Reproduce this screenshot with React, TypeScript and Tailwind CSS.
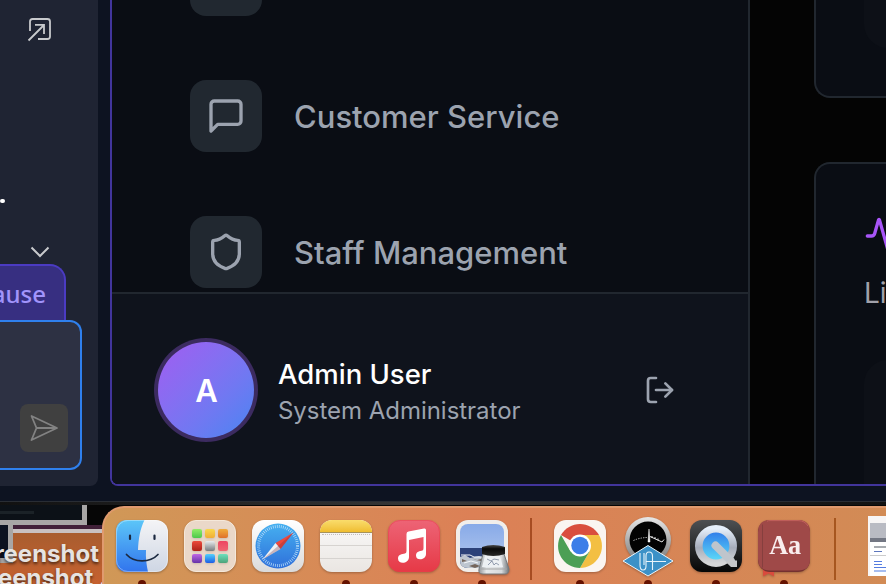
import type { ReactNode } from "react";
import { Activity, LogOut, Shield } from "lucide-react";

const sans = "font-['Inter','Liberation_Sans',sans-serif]";

function ChatPanel() {
  return (
    <aside className="flex h-[486px] w-[98px] shrink-0 flex-col overflow-hidden rounded-br-lg bg-[#1f2433]">
      <svg className="mt-[17px] ml-[27px] h-[25px] w-[25px] shrink-0" viewBox="0 0 25 25" fill="none" stroke="#c8cacd" strokeWidth="1.8">
        <path d="M3 14V4.500Q3 2 5.500 2H20.500Q23 2 23 4.500V19.500Q23 22 20.500 22H11M1.500 23.500 17 8M8 7.800H17V17" />
      </svg>
      <span className="mt-[157px] h-[4px] w-[4.500px] shrink-0 rounded-full bg-white" />
      <svg className="mt-[43px] ml-[30px] h-[12px] w-[20px] shrink-0" viewBox="0 0 20 12" fill="none" stroke="#c8cacd" strokeWidth="2">
        <path d="m1.500 1.500 8.500 8.500 8.500-8.500" />
      </svg>
      <div className="mt-[6px] flex h-[56px] w-[66px] shrink-0 items-center justify-end rounded-tr-[16px] border-t-2 border-r-2 border-[#4b3bc2] bg-[#372f81] pr-[18px] text-[#a194fb]">
        <span className="pt-px font-['Noto_Sans',sans-serif] text-[24px] leading-none font-medium">ause</span>
      </div>
      <div className="flex h-[150px] w-[82px] shrink-0 items-end justify-end rounded-r-xl border-y-2 border-r-2 border-[#2f80ed] bg-[#2d3143] pr-[12px] pb-[16px]">
        <button className="flex h-12 w-12 items-center justify-center rounded-lg bg-[#404040]">
          <svg className="h-[30px] w-[30px]" viewBox="0 0 30 30" fill="none" stroke="#828282" strokeWidth="1.8" strokeLinejoin="round">
            <path d="M2.500 3 28 15 2.500 27 7.500 15ZM7.500 15H28" />
          </svg>
        </button>
      </div>
    </aside>
  );
}

function MessageIcon() {
  return (
    <svg className="h-10 w-10" viewBox="0 0 24 24" fill="none" stroke="currentColor" strokeWidth="2" strokeLinecap="round" strokeLinejoin="round">
      <path d="M21 15a2 2 0 0 1-2 2H7l-4 4V5a2 2 0 0 1 2-2h14a2 2 0 0 1 2 2z" />
    </svg>
  );
}

function NavItem({ icon, label }: { icon: ReactNode; label: string }) {
  return (
    <a className="flex h-[72px] shrink-0 items-center gap-8 pl-[78px] text-[#9ca3af]">
      <span className="flex h-[72px] w-[72px] items-center justify-center rounded-[16px] bg-[#212830]">{icon}</span>
      <span className="pt-[3px] text-[31px] font-medium whitespace-nowrap">{label}</span>
    </a>
  );
}

function Sidebar() {
  return (
    <nav className="flex h-full w-[638px] shrink-0 flex-col border-r-2 border-[#21272f] bg-[#0a0d14]">
      <div className="flex h-[292px] shrink-0 flex-col overflow-hidden">
        <span className="ml-[78px] h-[16px] w-[72px] shrink-0 rounded-b-[16px] bg-[#212830]" />
        <div className="mt-16 flex flex-col gap-16">
          <NavItem label="Customer Service" icon={<MessageIcon />} />
          <NavItem label="Staff Management" icon={<Shield size={40} strokeWidth={2} />} />
        </div>
      </div>
      <div className="flex flex-1 items-center border-t-2 border-[#21272f] bg-[#0f131c] pt-[2px] pl-[42px]">
        <span className="flex h-[104px] w-[104px] items-center justify-center rounded-full bg-[#3c2b60] p-1">
          <span className="flex h-full w-full items-center justify-center rounded-full bg-linear-to-br from-[#a05cf1] to-[#4385f2] pt-[2px] pl-px text-[31px] font-semibold text-white">A</span>
        </span>
        <span className="mt-[4px] ml-[20px] flex flex-col whitespace-nowrap">
          <span className="text-[27.500px] leading-[36px] font-medium text-white">Admin User</span>
          <span className="text-[24px] leading-[37px] tracking-[-0.03px] text-[#9ca3af]">System Administrator</span>
        </span>
        <LogOut className="mr-[72px] ml-auto text-[#9ca3af]" size={32} strokeWidth={2} />
      </div>
    </nav>
  );
}

function Dashboard() {
  return (
    <main className="flex h-full w-[136px] flex-col overflow-hidden bg-[#040404] pl-16">
      <section className="flex h-[98px] w-[90px] shrink-0 justify-end rounded-bl-[16px] border-b-2 border-l-2 border-[#21272f] bg-[#0a0d14]">
        <span className="mr-[-6px] h-[48px] w-[46px] rounded-bl-[24px] bg-[#0d1017]" />
      </section>
      <section className="mt-16 flex w-[90px] flex-1 shrink-0 flex-col rounded-tl-[16px] border-t-2 border-l-2 border-[#21272f] bg-[#0a0d14] pl-12">
        <Activity className="mt-[52px] h-10 w-10 shrink-0 text-[#a855f7]" strokeWidth={2} />
        <span className="mt-[17px] text-[28px] leading-[40px] whitespace-nowrap text-[#a1a1aa]">Live</span>
        <span className="mt-[47px] w-[46px] flex-1 rounded-tl-[24px] bg-[#0d1017]" />
      </section>
    </main>
  );
}

function Desktop() {
  return (
    <div className="h-[82px] w-full overflow-hidden bg-[#060606]">
      <div className="h-[3px] bg-linear-to-r from-[#111] via-[#3a3a3a] to-[#111]" />
      <div className="flex h-[20px]">
        <div className="w-[87px] border-r-[5px] border-b-[5px] border-[#a8a6a5] bg-[#0c1117] pt-[6px]">
          <div className="h-[3px] w-[34px] bg-[#1b2227]" />
        </div>
      </div>
      <div className="flex h-[59px] bg-linear-to-b from-[#a45c2f] to-[#c6612f]">
        <div className="h-[38px] w-[13px] shrink-0 border-r-[5px] border-b-[5px] border-[#a8a6a5] bg-[#0c1220]" />
        <div className="h-[8px] w-[100px] border-b-4 border-[#c9c1c1] bg-[#412038]" />
      </div>
    </div>
  );
}

function FileLabels() {
  return (
    <div className="absolute top-[542px] left-[-20px] flex w-[130px] flex-col font-bold whitespace-nowrap text-[#e6e3e1] [text-shadow:0_2px_3px_#0009]">
      <span className="w-[119px] text-right text-[24px] leading-[24px]">reenshot</span>
      <span className="w-[127px] text-right text-[24px] leading-[24px]">reenshot .</span>
    </div>
  );
}

function Finder() {
  return (
    <svg viewBox="0 0 52 52" className="h-full w-full">
      <defs>
        <linearGradient id="fBlue" x2="0" y2="1"><stop stopColor="#5cc6f8" /><stop offset="1" stopColor="#3174ed" /></linearGradient>
        <linearGradient id="fWhite" x2="0" y2="1"><stop stopColor="#f4f4f6" /><stop offset="1" stopColor="#ced6e4" /></linearGradient>
      </defs>
      <rect width="52" height="52" rx="12" fill="url(#fWhite)" />
      <path d="M12 0H28.500C24 9 22.500 19 22 30H30C29.500 38 30.500 45 32 52H12Q0 52 0 40V12Q0 0 12 0Z" fill="url(#fBlue)" />
      <path d="M10.500 34.500C18 43 34 43 42 34.500" fill="none" stroke="#1b2940" strokeWidth="1.700" strokeLinecap="round" />
      <path d="M14 15.500v3.500M38.500 15.500v3.500" fill="none" stroke="#1b2940" strokeWidth="2.200" strokeLinecap="round" />
      <rect x=".5" y=".5" width="51" height="51" rx="11.500" fill="none" stroke="#fff" strokeOpacity=".35" />
    </svg>
  );
}

const tiles = [
  "from-[#90ed67] to-[#4bc84b]", "from-[#f9d84c] to-[#f0ad35]", "from-[#f0ad3c] to-[#df702b]",
  "from-[#ec493b] to-[#ad2118]", "from-[#e9edee] to-[#777c7e]", "from-[#ee4561] to-[#ef6571]",
  "from-[#c066e5] to-[#6633a8]", "from-[#57d0fa] to-[#235be4]", "from-[#6ce0bd] to-[#4ca37a]",
];

function Launchpad() {
  return (
    <div className="grid h-full w-full grid-cols-3 content-center justify-center gap-[3px] rounded-xl border border-[#f5e8da] bg-[#ead8c9] p-[7px]">
      {tiles.map((t) => <span key={t} className={"h-[9.500px] rounded-[2px] bg-linear-to-b shadow-sm " + t} />)}
    </div>
  );
}

function Safari() {
  return (
    <svg viewBox="0 0 52 52" className="h-full w-full">
      <defs>
        <linearGradient id="sBlue" x2="0" y2="1"><stop stopColor="#46b0f0" /><stop offset="1" stopColor="#2f70da" /></linearGradient>
        <linearGradient id="sBg" x2="0" y2="1"><stop stopColor="#fff" /><stop offset="1" stopColor="#dadada" /></linearGradient>
      </defs>
      <rect width="52" height="52" rx="12" fill="url(#sBg)" />
      <circle cx="26" cy="26" r="22.500" fill="url(#sBlue)" />
      <circle cx="26" cy="26" r="19.500" fill="none" stroke="#bde1fa" strokeWidth="3" strokeDasharray=".7 1.350" />
      <path d="m41.500 12.500-18 10.500 5 6Z" fill="#ef493d" />
      <path d="m10.500 39.500 13-16.500 5 6Z" fill="#f0f1f3" />
      <path d="m10.500 39.500 31-27-13 16.500Z" fill="#712c3e" opacity=".3" />
    </svg>
  );
}

function Notes() {
  return (
    <div className="flex h-full w-full flex-col overflow-hidden rounded-xl bg-linear-to-b from-[#fafafa] to-[#eae6e2]">
      <span className="h-[13px] shrink-0 border-b border-[#a6935b] bg-linear-to-b from-[#fadd6b] to-[#efbd2e]" />
      <span className="mx-[2px] border-b border-dotted border-[#c3bebb] pt-px" />
      <span className="h-[11px] border-b border-[#d6d3d0]" />
      <span className="h-[13px] border-b border-[#d6d3d0]" />
    </div>
  );
}

function Music() {
  return (
    <svg viewBox="0 0 52 52" className="h-full w-full">
      <defs><linearGradient id="mRed" x2="0" y2="1"><stop stopColor="#ed6476" /><stop offset="1" stopColor="#e63946" /></linearGradient></defs>
      <rect width="52" height="52" rx="12" fill="url(#mRed)" />
      <rect x=".5" y=".5" width="51" height="51" rx="11.500" fill="none" stroke="#e83e4a" strokeOpacity=".5" />
      <path d="M18.500 14Q18.500 12 20.500 11.600L36 8.500Q38 8.100 38 10V34C38 40 28 41.500 28 35.500C28 31.500 32 31 34.500 30.500Q35.500 30.200 35.500 28V17L21 20V37C21 44 10 45 10 38.500C10 34.500 14 34 17 33.500Q18.500 33.200 18.500 31Z" fill="#fff" />
    </svg>
  );
}

function Preview() {
  return (
    <svg viewBox="0 0 52 52" className="h-full w-full overflow-visible">
      <defs>
        <linearGradient id="pSky" x2="0" y2="1"><stop stopColor="#88aae8" /><stop offset="1" stopColor="#b5caee" /></linearGradient>
        <linearGradient id="pGlass"><stop stopColor="#929599" /><stop offset=".25" stopColor="#e6e9eb" /><stop offset=".75" stopColor="#d7dadc" /><stop offset="1" stopColor="#6e7377" /></linearGradient>
        <linearGradient id="pCap" x2="0" y2="1"><stop stopColor="#4b4b4b" /><stop offset=".35" stopColor="#090909" /><stop offset="1" stopColor="#292929" /></linearGradient>
      </defs>
      <rect width="52" height="52" rx="12" fill="#f1eeeb" />
      <rect x="4" y="4" width="44" height="44" rx="8" fill="url(#pSky)" />
      <path d="M4 28H48V40Q48 48 40 48H12Q4 48 4 40Z" fill="#2c4178" />
      <path d="M4 37 9 35 14 38 23 36 31 39V48H12Q4 48 4 40Z" fill="#bdc5cf" />
      <path d="m6 39 5 2-5 1Zm9-1 6 2 4-1v2l-5-1Zm-2 8 6-2 5 2-5 2Z" fill="#75655b" />
      <path d="M5 35h9l4 2h8M8 43l7-2 7 2" stroke="#f5f7fa" fill="none" />
      <path d="M27 34H48L53 49Q53 54 49 54H27Q22 54 23 49Z" fill="url(#pGlass)" stroke="#74797d" />
      <path d="M29 36H44L47 47H26Z" fill="#edf0f3" />
      <path d="m31 39 4 2 3-2 5 1M32 45l4-4 2 4 2-2 3 2" stroke="#7b879c" strokeWidth=".8" fill="none" />
      <path d="M25 49H51" stroke="#a5a5a5" />
      <path d="M26 27Q37 23 49 27V34Q37 38 26 34Z" fill="url(#pCap)" />
    </svg>
  );
}

function Chrome() {
  return (
    <svg viewBox="0 0 52 52" className="h-full w-full">
      <rect width="52" height="52" rx="12" fill="#faf5f1" />
      <path d="M26 26 7 15A22 22 0 0 1 45 15Z" fill="#d94e3e" />
      <path d="M26 15H45A22 22 0 0 1 26 48L35.500 31.500Z" fill="#f3bf42" />
      <path d="M7 15A22 22 0 0 0 26 48L35.500 31.500 26 26 16.500 31.500Z" fill="#4c9f55" />
      <circle cx="26" cy="25.500" r="11" fill="#fff" />
      <circle cx="26" cy="25.500" r="8.700" fill="#3d7ee8" />
    </svg>
  );
}

function UniversalAudio() {
  return (
    <svg viewBox="0 0 52 52" className="h-full w-full overflow-visible">
      <defs><linearGradient id="uRing" x2="0" y2="1"><stop stopColor="#e7e7e7" /><stop offset="1" stopColor="#777" /></linearGradient></defs>
      <circle cx="26" cy="20" r="23" fill="url(#uRing)" />
      <circle cx="26" cy="20" r="18.500" fill="#030303" />
      <path d="M11.500 20.500Q18 17.500 26 17.500" fill="none" stroke="#c4c4c4" strokeDasharray="1.300 1.200" />
      <path d="M26 22 27 9 28 22Z" fill="#fff" stroke="#fff" strokeWidth=".5" />
      <path d="M28 16.500 40 22 42 19.500M30 16v2m3-1v2m3-.500v2" fill="none" stroke="#e4e4e4" strokeWidth="1" />
      <path d="M26 25.500 51 41 26 56 1 41Z" fill="#3c91c7" stroke="#eaf5fb" strokeWidth="1" />
      <path d="M18 33V45Q18 50 21 50Q24 50 24 46V36Q24 32 27 32Q30.500 32 30.500 36V50M22 33V45M24 41.500H44" fill="none" stroke="#e7f4fb" strokeWidth="1.100" />
    </svg>
  );
}

function QuickTime() {
  return (
    <svg viewBox="0 0 52 52" className="h-full w-full">
      <defs>
        <linearGradient id="qBg" x2="0" y2="1"><stop stopColor="#4d5053" /><stop offset="1" stopColor="#050606" /></linearGradient>
        <linearGradient id="qRing" x2="0" y2="1"><stop stopColor="#e5effb" /><stop offset=".55" stopColor="#a6adbb" /><stop offset="1" stopColor="#d5d6d7" /></linearGradient>
        <linearGradient id="qBlue" x2="0" y2="1"><stop stopColor="#2c74e8" /><stop offset="1" stopColor="#60e2fa" /></linearGradient>
      </defs>
      <rect width="52" height="52" rx="12" fill="url(#qBg)" />
      <circle cx="26" cy="26" r="17.200" fill="url(#qBlue)" stroke="url(#qRing)" strokeWidth="7.600" />
      <path d="M25.500 25.500 41 41" stroke="#bfc5cc" strokeWidth="8" strokeLinecap="round" />
      <path d="M36 42 43 37.500 44 40.500H47V47H41Z" fill="#c5c7c9" />
    </svg>
  );
}

function Dictionary() {
  return (
    <svg viewBox="0 0 52 52" className="h-full w-full overflow-visible">
      <path d="M5 48H16V56.500L10.500 53.500 5 56.500Z" fill="#d94b3d" />
      <rect width="52" height="52" rx="12" fill="#74302f" />
      <path d="M12 0H40Q52 0 52 12V39Q52 50.500 40 50.500H12Q0 50.500 0 39V12Q0 0 12 0Z" fill="#9f4948" />
      <path d="M9 1.200Q10 .600 12 .600H40Q47 .600 50 6" fill="none" stroke="#c2605c" />
      <path d="M4.500 4.500V47.500" stroke="#863f3e" />
      <text x="27.200" y="34" fill="#f9eeee" textAnchor="middle" fontFamily="Liberation Serif, serif" fontSize="28" fontWeight="700" textLength="32" lengthAdjust="spacingAndGlyphs">Aa</text>
    </svg>
  );
}

function DocumentStack() {
  return (
    <div className="mt-[-4px] ml-4 flex h-[60px] w-[40px] shrink-0 flex-col border-t-[7px] border-l-2 border-[#f7f5f5] bg-white">
      <div className="flex h-[19px] shrink-0 flex-col items-center justify-end bg-[#b9bbc3]">
        <span className="h-1 w-1 rounded-full border border-white" />
        <span className="mt-1 h-1 w-full bg-[#737783]" />
      </div>
      <span className="mx-1 mt-1 h-[2px] bg-[#a7abb0]" />
      <span className="mt-[3px] ml-1 h-px w-2 bg-[#5e77bd]" />
      <span className="mt-[3px] h-px bg-[#ccc]" />
      <span className="mt-[5px] ml-1 h-px w-2 bg-[#557ce0]" />
      <span className="mt-[2px] ml-1 h-px w-2 bg-[#557ce0]" />
      <span className="mt-[2px] ml-1 h-px w-4 bg-[#557ce0]" />
      <span className="mt-[2px] ml-1 h-[2px] w-full bg-[#a6bdf0]" />
    </div>
  );
}

function DockItem({ children, running = true }: { children: ReactNode; running?: boolean }) {
  return (
    <div className="flex w-[52px] shrink-0 flex-col items-center">
      <div className="h-[52px] w-[52px] drop-shadow-[0_1px_1px_#0004]">{children}</div>
      {running && <span className="mt-[8px] h-2 w-2 rounded-full bg-[#651200]" />}
    </div>
  );
}

function Dock() {
  return (
    <div className="absolute top-[506px] left-[102px] flex h-[96px] w-[820px] items-start gap-4 rounded-tl-[22px] border-t-2 border-l-2 border-[#e09a6e] bg-linear-to-r from-[#d09857] via-[#dc8056] via-45% to-[#d18c55] pt-[12px] pl-[12px]">
      <DockItem><Finder /></DockItem>
      <DockItem running={false}><Launchpad /></DockItem>
      <DockItem running={false}><Safari /></DockItem>
      <DockItem><Notes /></DockItem>
      <DockItem><Music /></DockItem>
      <DockItem><Preview /></DockItem>
      <span className="mx-[6px] mt-[-2px] h-[62px] w-[2px] shrink-0 bg-[#a64c22]" />
      <DockItem><Chrome /></DockItem>
      <DockItem><UniversalAudio /></DockItem>
      <DockItem><QuickTime /></DockItem>
      <DockItem><Dictionary /></DockItem>
      <span className="mt-[-2px] ml-[8px] h-[62px] w-[2px] shrink-0 bg-[#a6561f]" />
      <DocumentStack />
    </div>
  );
}

export default function App() {
  return (
    <div className={"relative flex h-[584px] w-[886px] flex-col overflow-hidden bg-black " + sans}>
      <div className="flex h-[502px] shrink-0 gap-3 border-b border-[#292d34] bg-[#0d1321]">
        <ChatPanel />
        <div className="flex h-[486px] w-[776px] shrink-0 overflow-hidden rounded-bl-lg border-b-2 border-l-2 border-[#42359c]">
          <Sidebar />
          <Dashboard />
        </div>
      </div>
      <Desktop />
      <FileLabels />
      <Dock />
    </div>
  );
}
